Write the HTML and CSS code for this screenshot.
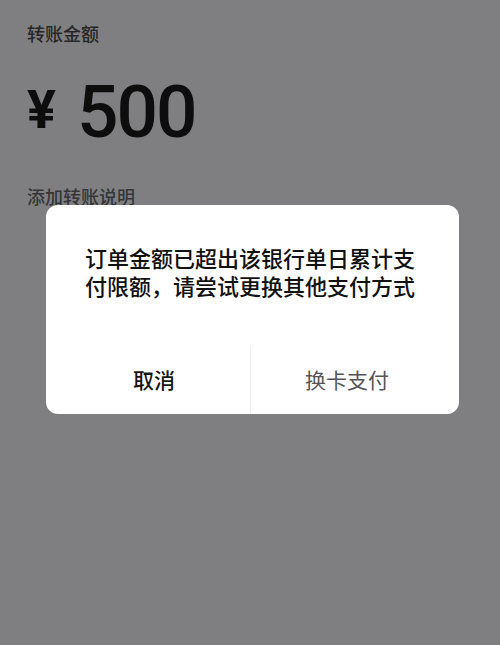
FILE: index.html
```html
<!DOCTYPE html>
<html lang="zh-CN">
<head>
  <meta charset="UTF-8" />
  <meta name="viewport" content="width=device-width, initial-scale=1.0" />
  <title>转账</title>
  <link rel="stylesheet" href="styles.css">
</head>
<body>
  <div class="page">
    <div class="label">转账金额</div>
    <div class="amount">
      <span class="currency">¥</span>
      <span class="value">500</span>
    </div>
    <div class="note">添加转账说明</div>
  </div>

  <div class="dialog">
    <div class="message">订单金额已超出该银行单日累计支<br>付限额，请尝试更换其他支付方式</div>
    <div class="actions">
      <button class="btn btn-cancel">取消</button>
      <button class="btn btn-switch">换卡支付</button>
    </div>
  </div>
</body>
</html>
```

FILE: styles.css
```css
* {
  box-sizing: border-box;
}

html, body {
  height: 100%;
}

body {
  margin: 0;
  background: #7f7f81;
  font-family: "Noto Sans CJK SC", "Noto Sans", sans-serif;
  color: #2a2a2a;
  overflow: hidden;
}

.page {
  padding: 21px 27px 0;
}

.label {
  font-size: 18px;
  line-height: 24px;
  font-weight: 500;
  color: #262627;
}

.amount {
  display: flex;
  align-items: center;
  margin-top: 31px;
  height: 73px;
  font-family: Roboto, "Liberation Sans", sans-serif;
  color: #0d0d0d;
}

.currency {
  font-size: 54px;
  font-weight: 700;
  line-height: 1;
  margin-top: -6px;
  margin-left: 0;
}

.value {
  font-size: 73px;
  font-weight: 500;
  line-height: 1;
  letter-spacing: -2px;
  margin-left: 21px;
}

.note {
  margin-top: 35px;
  font-size: 18px;
  line-height: 24px;
  font-weight: 500;
  color: #353537;
}

.dialog {
  position: absolute;
  top: 205px;
  left: 46px;
  width: 413px;
  height: 209px;
  background: #fff;
  border-radius: 12px;
  display: flex;
  flex-direction: column;
}

.message {
  padding: 38px 20px 0 39px;
  height: 142px;
  font-size: 22px;
  line-height: 28px;
  font-weight: 500;
  color: #111;
}

.actions {
  flex: 1;
  display: flex;
}

.btn {
  flex: 1;
  border: none;
  background: transparent;
  font-family: inherit;
  font-size: 21px;
  padding: 0;
  cursor: pointer;
}

.btn-cancel {
  color: #161616;
  font-weight: 500;
  padding-left: 12px;
  padding-bottom: 4px;
  border-right: 1px solid #f0f0f0;
}

.btn-switch {
  color: #555557;
  padding-right: 16px;
  padding-bottom: 4px;
}
```
